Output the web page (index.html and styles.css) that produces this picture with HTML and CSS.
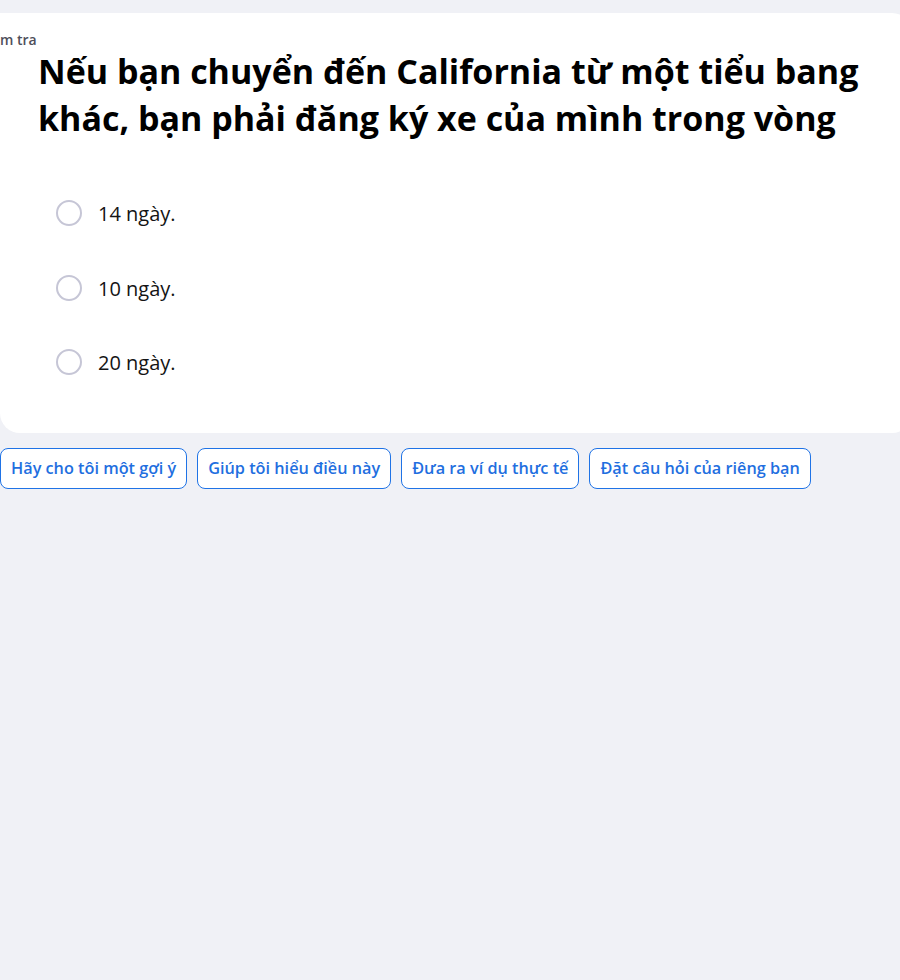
FILE: index.html
```html
<!DOCTYPE html>
<html lang="vi">
<head>
<meta charset="utf-8">
<title>Kiểm tra</title>
<link rel="stylesheet" href="styles.css">
</head>
<body>
<div class="page">
  <section class="card">
    <div class="label">Kiểm tra</div>
    <h1 class="question">Nếu bạn chuyển đến California từ một tiểu bang khác, bạn phải đăng ký xe của mình trong vòng</h1>
    <ul class="options">
      <li class="option"><span class="radio"></span><span class="option-text">14 ngày.</span></li>
      <li class="option"><span class="radio"></span><span class="option-text">10 ngày.</span></li>
      <li class="option"><span class="radio"></span><span class="option-text">20 ngày.</span></li>
    </ul>
  </section>
  <div class="chips">
    <button class="chip">Hãy cho tôi một gợi ý</button>
    <button class="chip">Giúp tôi hiểu điều này</button>
    <button class="chip">Đưa ra ví dụ thực tế</button>
    <button class="chip">Đặt câu hỏi của riêng bạn</button>
  </div>
</div>
</body>
</html>
```

FILE: styles.css
```css
html, body {
  margin: 0;
  padding: 0;
  background: #f0f1f6;
  overflow: hidden;
  font-family: "Open Sans", "Noto Sans", sans-serif;
}

.page {
  padding-top: 13px;
  width: 912px;
}

.card {
  background: #ffffff;
  border-radius: 0 20px 20px 20px;
  padding: 19px 0 33px 0;
}

.label {
  font-size: 14px;
  line-height: 16px;
  font-weight: 600;
  color: #4e4e5a;
  margin-left: -21px;
  white-space: nowrap;
}

.question {
  margin: 0 0 0 38px;
  font-size: 34px;
  line-height: 47px;
  font-weight: 700;
  color: #000000;
  max-width: 835px;
}

.options {
  list-style: none;
  margin: 34px 0 0 0;
  padding: 0 0 0 56px;
}

.option {
  display: flex;
  align-items: center;
  gap: 16px;
  height: 74.5px;
}

.radio {
  width: 22px;
  height: 22px;
  border: 2px solid #c6c6d6;
  border-radius: 50%;
  box-sizing: content-box;
  flex: none;
}

.option-text {
  font-size: 20px;
  color: #141414;
  padding-top: 1px;
}

.chips {
  display: flex;
  gap: 10px;
  margin-top: 15px;
}

.chip {
  height: 41px;
  padding: 0 10px;
  border: 1px solid #1f73e6;
  border-radius: 8px;
  background: #ffffff;
  color: #1f6fe0;
  font-family: "Open Sans", "Noto Sans", sans-serif;
  font-size: 16.25px;
  font-weight: 600;
  white-space: nowrap;
  cursor: pointer;
}
```
